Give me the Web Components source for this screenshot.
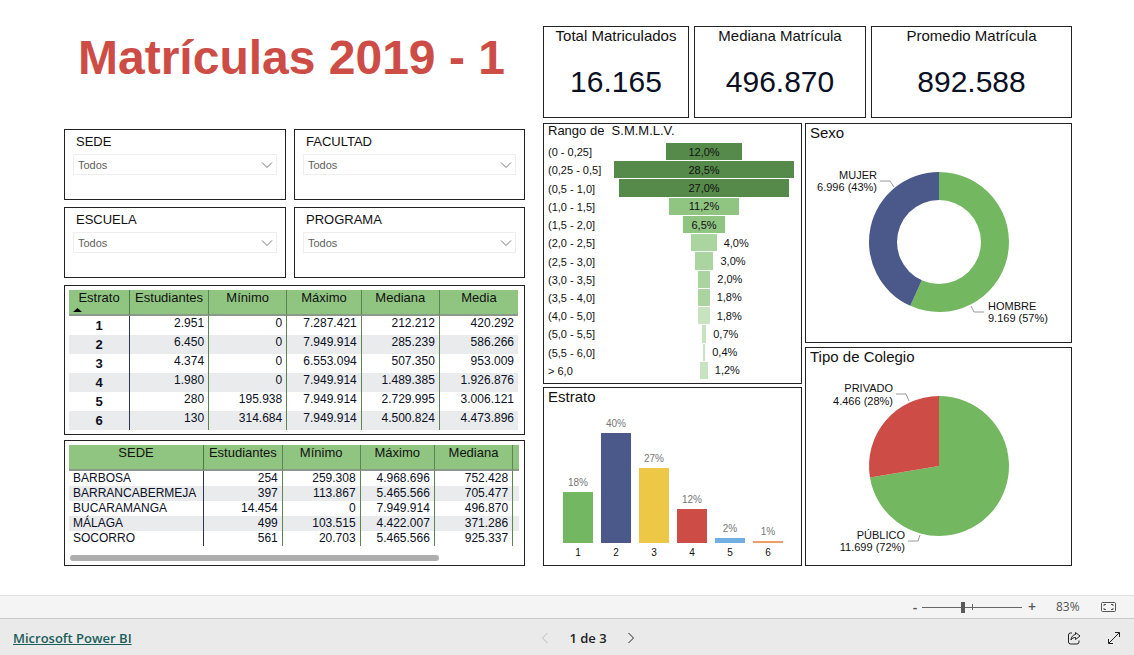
<!DOCTYPE html>
<html lang="es">
<head>
<meta charset="utf-8">
<meta name="viewport" content="width=device-width, initial-scale=1">
<title>Matrículas 2019 - 1</title>
<style>
  html, body { margin: 0; }
  body { font-family: "Liberation Sans", Arial, sans-serif; color: #111; background: #fff; }
</style>
</head>
<body>
<report-app></report-app>
<script>
const define = (name, render) => customElements.define(name, class extends HTMLElement {
  connectedCallback() {
    if (this.shadowRoot) return;
    const template = document.createElement('template');
    template.innerHTML = render(this);
    this.attachShadow({ mode: 'open' }).append(template.content.cloneNode(true));
  }
});
const base = `*, *::before { box-sizing: border-box; } :host { display: block; box-sizing: border-box; min-width: 0; }`;
const list = el => JSON.parse(el.getAttribute('data'));

define('report-panel', el => `
  <style>${base}
    :host { border: 1px solid #222; background: #fff; display: flex; flex-direction: column; }
    h2 { margin: 0; padding-left: 4px; font-size: 15px; line-height: 18px; font-weight: 400; color: #111; }
    :host([compact]) h2 { font-size: 13px; line-height: 14px; white-space: pre; }
  </style>
  ${el.hasAttribute('heading') ? `<h2>${el.getAttribute('heading')}</h2>` : ''}<slot></slot>`);

define('report-title', () => `
  <style>${base}
    h1 { margin: 0; font-size: 48px; line-height: 64px; font-weight: 700; color: #cd4c46; padding-left: 14px; white-space: nowrap; }
  </style>
  <h1><slot></slot></h1>`);

define('slicer-box', el => `
  <style>${base}
    :host { border: 1px solid #222; padding: 4px 8px 24px; }
    label { display: block; padding-left: 3px; font-size: 13px; line-height: 16px; margin-bottom: 4px; color: #111; }
    .field { display: grid; align-items: center; }
    select, svg { grid-area: 1 / 1; }
    select { appearance: none; width: 100%; height: 21px; border: 1px solid #eee; border-radius: 0; background: #fff;
      margin: 0; padding: 0 24px 0 4px; font: 11px "Liberation Sans", Arial, sans-serif; color: #605e5c; }
    svg { justify-self: end; margin-right: 4px; pointer-events: none; }
  </style>
  <label for="s">${el.getAttribute('label')}</label>
  <div class="field">
    <select id="s"><option>Todos</option></select>
    <svg width="12" height="8" viewBox="0 0 12 8" fill="none" stroke="#777"><path d="M1 1.5 6 6.5 11 1.5"/></svg>
  </div>`);

define('kpi-card', el => `
  <style>${base}
    :host { border: 1px solid #222; text-align: center; padding-bottom: 17px; }
    h2 { margin: 0; font-size: 15px; line-height: 18px; font-weight: 400; white-space: nowrap; }
    p { margin: 19px 0 0; font-size: 30px; line-height: 36px; color: #0b1023; }
  </style>
  <h2>${el.getAttribute('label')}</h2><p>${el.getAttribute('value')}</p>`);

define('data-table', el => {
  const { cols, widths, rows, tail } = list(el);
  const extra = tail ? '<td></td>' : '';
  return `
  <style>${base}
    :host { padding: 4px 5px 4px 4px; border: 1px solid #222; }
    table { width: 100%; table-layout: fixed; border-collapse: separate; border-spacing: 0; color: #0b1023; }
    :host([fit]) { padding-right: 6px; }
    th, td { padding: 0 4px; font-size: 12px; text-align: right; vertical-align: top; border-right: 1px solid #5c8455; white-space: nowrap; }
    thead th, thead td { height: 26px; padding: 0; font-size: 13px; line-height: 16px; font-weight: 400; text-align: center;
      background: #90c581; border-bottom: 2px solid #8a998a; color: #111; }
    tr > :first-child { border-right-color: #2c3553; }
    thead tr > :first-child { border-right-color: #4d7a46; }
    tr > :last-child { border-right: 0; }
    tbody tr:nth-child(even) > * { background: #e9ebed; }
    tbody th { text-align: left; font-weight: 400; }
    tbody th, tbody td { line-height: 15px; }
    :host([fit]) tbody td { height: 19px; }
    :host([fit]) tbody th { text-align: center; font-weight: 700; font-size: 13px; line-height: 19px; }
    .sort { display: block; margin-left: 4px; }
    .bar { margin: 9px 0 0 1px; width: 82%; height: 6px; border-radius: 3px; background: #aeaeae; }
  </style>
  <table>
    <colgroup>${widths.map(w => `<col style="width:${w}%">`).join('')}${tail ? '<col>' : ''}</colgroup>
    <thead><tr>${cols.map((c, i) => `<th scope="col">${c}${i === 0 && !tail ? '<svg class="sort" width="9" height="8" viewBox="0 0 9 8"><path d="M0 6 4.500 2 9 6z"/></svg>' : ''}</th>`).join('')}${extra}</tr></thead>
    <tbody>${rows.map(r => `<tr>${r.map((v, i) => i ? `<td>${v}</td>` : `<th scope="row">${v}</th>`).join('')}${extra}</tr>`).join('')}</tbody>
  </table>${tail ? '<div class="bar"></div>' : ''}`;
});

define('funnel-chart', el => {
  const rows = list(el);
  const max = Math.max(...rows.map(r => r[1]));
  return `
  <style>${base}
    :host { flex: 1; display: flex; flex-direction: column; padding: 5px 7px 3px 4px; font-size: 11px; color: #111; }
    .row { flex: 1; min-height: 18px; display: grid; grid-template-columns: 66px 1fr; align-items: stretch; }
    .row > span { align-self: center; line-height: 14px; white-space: nowrap; }
    .track { display: grid; grid-template-columns: 1fr var(--w) 1fr; padding-bottom: 1px; align-items: center; }
    .bar { grid-column: 2; align-self: stretch; display: grid; place-items: center; background: var(--c); }
    .out { grid-column: 3; padding-left: 7px; }
  </style>
  ${rows.map(([label, v, color]) => {
    const text = v.toFixed(1).replace('.', ',') + '%';
    return `<div class="row"><span>${label}</span><div class="track" style="--w:${v / max * 100}%;--c:${color}">
      <div class="bar">${v > 5 ? text : ''}</div>${v > 5 ? '' : `<div class="out">${text}</div>`}</div></div>`;
  }).join('')}`;
});

define('column-chart', el => `
  <style>${base}
    :host { flex: 1; display: flex; align-items: flex-end; gap: 8px; padding: 0 18px 6px 19px; font-size: 10px; }
    .col { flex: 1; text-align: center; line-height: 12px; }
    .col span { display: block; color: #777; margin-bottom: 3px; }
    .col b { display: block; font-weight: 400; color: #111; margin-top: 4px; }
    .bar { height: calc(var(--v) * 1px * 2.76); background: var(--c); }
  </style>
  ${list(el).map(([n, v, c]) => `<div class="col"><span>${Math.round(v)}%</span><div class="bar" style="--v:${v};--c:${c}"></div><b>${n}</b></div>`).join('')}`);

define('pie-chart', el => {
  const { hole, first, colors, labels, leaders } = list(el);
  const a = first * 2 * Math.PI, x = 70 * Math.sin(a), y = -70 * Math.cos(a);
  return `
  <style>${base}
    :host { display: grid; justify-content: center; padding-top: 10px; }
    svg { display: block; max-width: 100%; }
    text { font-size: 11px; fill: #111; }
    polyline { fill: none; stroke: #999; }
  </style>
  <svg width="264" height="180" viewBox="-132 -90 264 180" role="img">
    <path d="M0 0V-70A70 70 0 1 1 ${x} ${y}z" fill="${colors[0]}"/>
    <path d="M0 0L${x} ${y}A70 70 0 0 1 0 -70z" fill="${colors[1]}"/>
    ${hole ? '<circle r="42" fill="#fff"/>' : ''}
    ${leaders.map(p => `<polyline points="${p}"/>`).join('')}
    ${labels.map(l => `<text text-anchor="${l[0]}" x="${l[1]}" y="${l[2]}">${l[3]}</text>`).join('')}
  </svg>`;
});

define('zoom-bar', () => `
  <style>${base}
    :host { display: flex; justify-content: flex-end; align-items: center; height: 23px; padding-right: 18px;
      background: #f4f4f4; border-top: 1px solid #e1e1e1; font-family: "Open Sans", sans-serif; color: #555; }
    button { border: 0; margin: 0; padding: 0; background: none; color: #555; font: 600 14px/20px "Open Sans", sans-serif; width: 14px; }
    input { appearance: none; width: 100px; height: 12px; margin: 0 3px 0 0;
      background: linear-gradient(#666, #666) 50px 50% / 1px 6px no-repeat, linear-gradient(#666, #666) 0 50% / 100% 1px no-repeat; }
    input::-webkit-slider-thumb { appearance: none; width: 4px; height: 11px; background: #5a5a5a; }
    output { font-size: 12px; line-height: 16px; width: 23px; margin: 0 22px 0 17px; }
    .fit { line-height: 0; width: 15px; }
  </style>
  <button aria-label="Alejar">-</button>
  <input type="range" min="0" max="100" value="41" aria-label="Zoom">
  <button aria-label="Acercar">+</button>
  <output>83%</output>
  <button class="fit" aria-label="Ajustar a la página"><svg width="15" height="12" viewBox="0 0 15 12" fill="none" stroke="#555">
    <rect x=".5" y="1.500" width="14" height="9" rx="1"/><path d="M5 3.500H3v1.500M3 7v1.500h2M10 3.500h2v1.500M12 7v1.500h-2"/></svg></button>`);

define('nav-footer', () => `
  <style>${base}
    :host { display: grid; grid-template-columns: 1fr auto 1fr; align-items: center; height: 37px; padding: 2px 13px 0;
      background: #eaeaea; border-top: 1px solid #c8c8c8; font: 600 13px/20px "Open Sans", sans-serif; }
    a { color: #1b5e5a; justify-self: start; }
    nav { display: flex; align-items: center; gap: 20px; color: #222; margin-left: 42px; }
    .tools { justify-self: end; display: flex; gap: 26px; }
    button { border: 0; margin: 0; padding: 0; background: none; display: flex; }
    svg { fill: none; stroke: #222; }
    button[disabled] svg { stroke: #bbb; }
  </style>
  <a href="#">Microsoft Power BI</a>
  <nav aria-label="Páginas">
    <button aria-label="Página anterior" disabled><svg width="8" height="12" viewBox="0 0 8 12"><path d="M6.500 1 1.500 6l5 5"/></svg></button>
    <span>1 de 3</span>
    <button aria-label="Página siguiente"><svg width="8" height="12" viewBox="0 0 8 12"><path d="M1.500 1l5 5-5 5"/></svg></button>
  </nav>
  <div class="tools">
    <button aria-label="Compartir"><svg width="14" height="14" viewBox="0 0 14 14"><path d="M5 2H3.500A2 2 0 0 0 1.500 4v7A2 2 0 0 0 3.500 13H10a2 2 0 0 0 2-2V9.500M8.500 1.500 13 5 8.500 8.500V6.500C6.500 6.500 5 7.200 4 9 4.200 5.800 6 3.800 8.500 3.500z"/></svg></button>
    <button aria-label="Pantalla completa"><svg width="14" height="14" viewBox="0 0 14 14"><path d="M1.500 12.500 12.500 1.500M8 1.500h4.500V6M1.500 8v4.500H6"/></svg></button>
  </div>`);

const attr = o => JSON.stringify(o).replace(/"/g, '&quot;');
const estrato = { cols: ['Estrato', 'Estudiantes', 'Mínimo', 'Máximo', 'Mediana', 'Media'], widths: [13.6, 17.6, 17.4, 16.6, 17.4, 17.4], rows: [
  ['1', '2.951', '0', '7.287.421', '212.212', '420.292'],
  ['2', '6.450', '0', '7.949.914', '285.239', '586.266'],
  ['3', '4.374', '0', '6.553.094', '507.350', '953.009'],
  ['4', '1.980', '0', '7.949.914', '1.489.385', '1.926.876'],
  ['5', '280', '195.938', '7.949.914', '2.729.995', '3.006.121'],
  ['6', '130', '314.684', '7.949.914', '4.500.824', '4.473.896']] };
const sede = { tail: true, cols: ['SEDE', 'Estudiantes', 'Mínimo', 'Máximo', 'Mediana'], widths: [30, 17.5, 17.3, 16.5, 17.4], rows: [
  ['BARBOSA', '254', '259.308', '4.968.696', '752.428'],
  ['BARRANCABERMEJA', '397', '113.867', '5.465.566', '705.477'],
  ['BUCARAMANGA', '14.454', '0', '7.949.914', '496.870'],
  ['MÁLAGA', '499', '103.515', '4.422.007', '371.286'],
  ['SOCORRO', '561', '20.703', '5.465.566', '925.337']] };
const dark = '#568a4b', mid = '#8fc481', light = '#abd5a0', pale = '#c7e3c0';
const rango = [['(0 - 0,25]', 12, dark], ['(0,25 - 0,5]', 28.5, dark], ['(0,5 - 1,0]', 27, dark], ['(1,0 - 1,5]', 11.2, mid],
  ['(1,5 - 2,0]', 6.5, mid], ['(2,0 - 2,5]', 4, light], ['(2,5 - 3,0]', 3, light], ['(3,0 - 3,5]', 2, light], ['(3,5 - 4,0]', 1.8, light],
  ['(4,0 - 5,0]', 1.8, pale], ['(5,0 - 5,5]', 0.7, pale], ['(5,5 - 6,0]', 0.4, pale], ['&gt; 6,0', 1.2, pale]];
const barras = [[1, 18.4, '#73b761'], [2, 40, '#4a588a'], [3, 27.1, '#ecc846'], [4, 12.3, '#cd4c46'], [5, 1.8, '#71afe2'], [6, 0.8, '#ee9e64']];
const sexo = { hole: true, first: 0.5672, colors: ['#73b761', '#4a588a'], leaders: ['-59,-61 -49,-61 -45,-55', '32,64 35,70 45,70'],
  labels: [['end', -62, -63, 'MUJER'], ['end', -62, -51, '6.996 (43%)'], ['start', 49, 68, 'HOMBRE'], ['start', 49, 80, '9.169 (57%)']] };
const colegio = { first: 0.7237, colors: ['#73b761', '#cd4c46'], leaders: ['-43,-72 -33,-72 -30,-65', '-31,75 -21,75 -19,69'],
  labels: [['end', -46, -74, 'PRIVADO'], ['end', -46, -61, '4.466 (28%)'], ['end', -34, 73, 'PÚBLICO'], ['end', -34, 85, '11.699 (72%)']] };

define('report-app', () => `
  <style>${base}
    :host { display: flex; flex-direction: column; min-height: 100vh; }
    main { flex: 1; display: grid; grid-template-columns: 461fr 529fr; gap: 18px; align-items: start; padding: 26px 62px 29px 64px; }
    .left, .right, .stack { display: flex; flex-direction: column; min-width: 0; }
    report-title { margin-bottom: 39px; }
    .slicers { display: grid; grid-template-columns: 222fr 231fr; gap: 7px 8px; margin-bottom: 7px; }
    data-table + data-table { margin-top: 5px; }
    .right { gap: 5px; }
    .kpis { display: grid; grid-template-columns: 146fr 172fr 201fr; gap: 5px; }
    .charts { display: grid; grid-template-columns: 259fr 267fr; gap: 3px; }
    .stack { gap: 3px; }
    .range { min-height: 261px; }
    .bars { min-height: 179px; }
    .pies { gap: 4px; }
    .pies report-panel { flex: 1; }
  </style>
  <main>
    <div class="left">
      <report-title>Matrículas 2019 - 1</report-title>
      <div class="slicers">
        <slicer-box label="SEDE"></slicer-box><slicer-box label="FACULTAD"></slicer-box>
        <slicer-box label="ESCUELA"></slicer-box><slicer-box label="PROGRAMA"></slicer-box>
      </div>
      <data-table fit data="${attr(estrato)}"></data-table>
      <data-table data="${attr(sede)}"></data-table>
    </div>
    <div class="right">
      <div class="kpis">
        <kpi-card label="Total Matriculados" value="16.165"></kpi-card>
        <kpi-card label="Mediana Matrícula" value="496.870"></kpi-card>
        <kpi-card label="Promedio Matrícula" value="892.588"></kpi-card>
      </div>
      <div class="charts">
        <div class="stack">
          <report-panel class="range" compact heading="Rango de  S.M.M.L.V."><funnel-chart data="${attr(rango)}"></funnel-chart></report-panel>
          <report-panel class="bars" heading="Estrato"><column-chart data="${attr(barras)}"></column-chart></report-panel>
        </div>
        <div class="stack pies">
          <report-panel heading="Sexo"><pie-chart data="${attr(sexo)}"></pie-chart></report-panel>
          <report-panel heading="Tipo de Colegio"><pie-chart data="${attr(colegio)}"></pie-chart></report-panel>
        </div>
      </div>
    </div>
  </main>
  <zoom-bar></zoom-bar>
  <nav-footer></nav-footer>`);
</script>
</body>
</html>
